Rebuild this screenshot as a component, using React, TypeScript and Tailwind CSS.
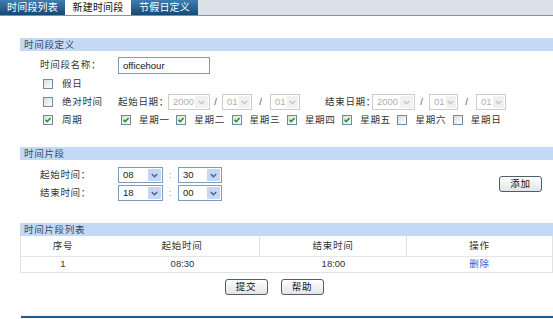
import React from "react";

const F = { fontFamily: '"Liberation Sans", "Noto Sans CJK SC", sans-serif' };

function Check({ on }: { on?: boolean }) {
  return (
    <svg width="10" height="10" viewBox="0 0 10 10" className="shrink-0">
      <defs>
        <linearGradient id="cbg" x1="0" y1="0" x2="1" y2="1">
          <stop offset="0" stopColor="#dcdcd6" />
          <stop offset="1" stopColor="#ffffff" />
        </linearGradient>
      </defs>
      <rect x="0.5" y="0.5" width="9" height="9" fill="url(#cbg)" stroke="#6d8aa8" />
      {on && <path d="M2.5 4.8 L4.2 6.6 L7.6 3" fill="none" stroke="#1f9a1f" strokeWidth="1.6" />}
    </svg>
  );
}

function Sel({ w, v, dis }: { w: string; v: string; dis?: boolean }) {
  return (
    <div
      className={`${w} shrink-0 h-[16px] flex items-stretch border bg-white tracking-normal ${dis ? "border-[#cdcdcd] text-[#b0b0b0]" : "border-[#7f9db9] text-[#222]"}`}
    >
      <span className="flex-1 pl-[4px] text-[9.5px] leading-[14px]">{v}</span>
      <span
        className={`w-[13px] m-[1px] flex items-center justify-center ${dis ? "bg-[#f1f1f1]" : "bg-[#c6d6f7]"}`}
      >
        <svg width="7" height="5" viewBox="0 0 7 5">
          <path d="M0.8 1 L3.5 3.7 L6.2 1" fill="none" stroke={dis ? "#c4c4c4" : "#4b5f86"} strokeWidth="1.4" />
        </svg>
      </span>
    </div>
  );
}

function Head({ t }: { t: string }) {
  return <div className="h-[13px] bg-[#c4d9f6] pl-[4px] text-[9.5px] leading-[13px] text-[#34495f]">{t}</div>;
}

function Btn({ t }: { t: string }) {
  return (
    <div className="w-[43px] h-[16px] border border-[#4f5d6c] rounded-[3px] bg-linear-to-b from-white to-[#e4e4e4] flex items-center justify-center text-[9.5px] text-[#111]">
      {t}
    </div>
  );
}

export default function App() {
  const days: [string, boolean][] = [
    ["星期一", true],
    ["星期二", true],
    ["星期三", true],
    ["星期四", true],
    ["星期五", true],
    ["星期六", false],
    ["星期日", false],
  ];
  return (
    <div className="w-[553px] h-[319px] bg-white overflow-hidden text-[#333] whitespace-nowrap tracking-[0.7px]" style={F}>
      <div className="flex h-[16px] bg-[#dbe1e8] border-b border-[#8393a3] tracking-[0.2px]">
        <div className="w-[65px] bg-linear-to-b from-[#3f7db0] to-[#164a76] text-white text-[10px] flex items-center justify-center">
          时间段列表
        </div>
        <div className="w-[66px] bg-white text-[#111] text-[10px] flex items-center justify-center border-b border-white">
          新建时间段
        </div>
        <div className="w-[67px] bg-linear-to-b from-[#3f7db0] to-[#164a76] text-white text-[10px] flex items-center justify-center">
          节假日定义
        </div>
      </div>

      <div className="ml-[20px] mt-[22px]">
        <Head t="时间段定义" />
        <div className="flex items-center h-[17px] mt-[6px] text-[9.5px]">
          <span className="w-[98px] pl-[20px] shrink-0">时间段名称：</span>
          <div className="w-[92px] h-[17px] border border-[#7f9db9] pl-[4px] text-[9.5px] leading-[15px] text-[#111] tracking-normal">
            officehour
          </div>
        </div>
        <div className="flex items-center h-[14px] mt-[3px] text-[9.5px]">
          <span className="pl-[23px] w-[42px] shrink-0">
            <Check />
          </span>
          <span>假日</span>
        </div>
        <div className="flex items-center h-[16px] mt-[3px] text-[9.5px]">
          <span className="pl-[23px] w-[42px] shrink-0">
            <Check />
          </span>
          <span className="w-[56px] shrink-0">绝对时间</span>
          <span className="w-[50px] shrink-0">起始日期：</span>
          <Sel w="w-[42px]" v="2000" dis />
          <span className="w-[12px] shrink-0 text-center text-[#555]">/</span>
          <Sel w="w-[30px]" v="01" dis />
          <span className="w-[18px] shrink-0 text-center text-[#555]">/</span>
          <Sel w="w-[30px]" v="01" dis />
          <span className="w-[25px] shrink-0" />
          <span className="w-[47px] shrink-0">结束日期：</span>
          <Sel w="w-[43px]" v="2000" dis />
          <span className="w-[14px] shrink-0 text-center text-[#555]">/</span>
          <Sel w="w-[29px]" v="01" dis />
          <span className="w-[18px] shrink-0 text-center text-[#555]">/</span>
          <Sel w="w-[30px]" v="01" dis />
        </div>
        <div className="flex items-center h-[14px] mt-[3px] text-[9.5px]">
          <span className="pl-[23px] w-[42px] shrink-0">
            <Check on />
          </span>
          <span className="w-[59px] shrink-0">周期</span>
          {days.map(([d, on]) => (
            <span key={d} className="w-[55.3px] shrink-0 flex items-center gap-[8px]">
              <Check on={on} />
              <span>{d}</span>
            </span>
          ))}
        </div>

        <div className="mt-[20px]">
          <Head t="时间片段" />
        </div>
        <div className="flex items-center mt-[7px]">
          <div className="flex-1">
            <div className="flex items-center h-[16px] text-[9.5px]">
              <span className="w-[98px] pl-[20px] shrink-0">起始时间：</span>
              <Sel w="w-[45px]" v="08" />
              <span className="w-[15px] text-center text-[#999]">:</span>
              <Sel w="w-[44px]" v="30" />
            </div>
            <div className="flex items-center h-[16px] mt-[2px] text-[9.5px]">
              <span className="w-[98px] pl-[20px] shrink-0">结束时间：</span>
              <Sel w="w-[45px]" v="18" />
              <span className="w-[15px] text-center text-[#999]">:</span>
              <Sel w="w-[44px]" v="00" />
            </div>
          </div>
          <div className="mr-[11px]">
            <Btn t="添加" />
          </div>
        </div>

        <div className="mt-[22px]">
          <Head t="时间片段列表" />
        </div>
        <div className="border-l border-r border-b border-[#e2e2e2] text-[9.5px]">
          <div className="flex h-[20px] items-center text-[#333]">
            <span className="w-[84px] text-center">序号</span>
            <span className="w-[155px] text-center border-r border-[#e0e0e0] h-full flex items-center justify-center">起始时间</span>
            <span className="w-[147px] text-center border-r border-[#e0e0e0] h-full flex items-center justify-center">结束时间</span>
            <span className="flex-1 text-center">操作</span>
          </div>
          <div className="flex h-[16px] items-center border-t border-[#e6e6e6] tracking-normal">
            <span className="w-[84px] text-center">1</span>
            <span className="w-[155px] text-center">08:30</span>
            <span className="w-[147px] text-center">18:00</span>
            <span className="flex-1 text-center text-[#3a63c6] tracking-[0.7px]">删除</span>
          </div>
        </div>

        <div className="flex justify-center gap-[13px] mt-[6px] pr-[5px] -ml-[20px]">
          <Btn t="提交" />
          <Btn t="帮助" />
        </div>

        <div className="mt-[20px] ml-[1px] h-[3px] bg-[#1f5b8d] border-t border-[#fbf6e6]" />
      </div>
    </div>
  );
}
